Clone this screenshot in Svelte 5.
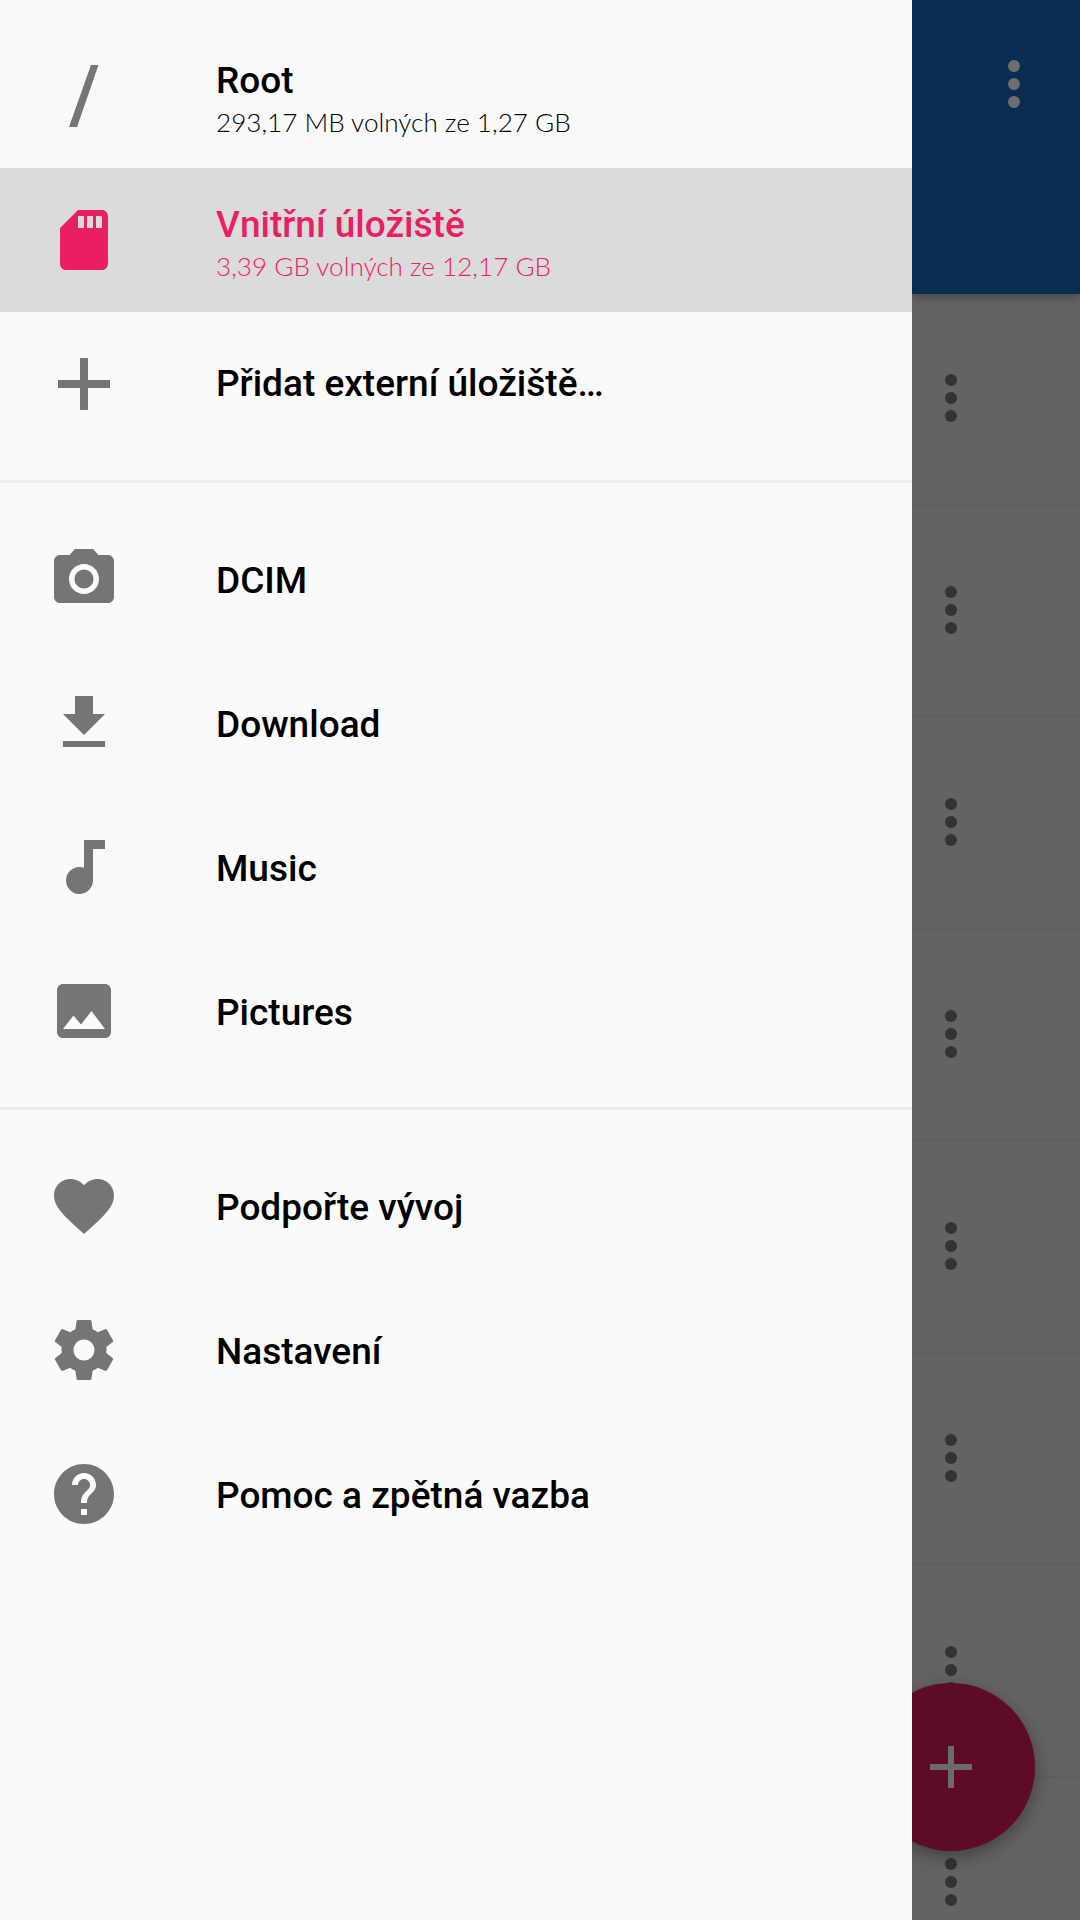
<script>
  const icons = {
    sd: 'M18 2h-8L4.02 8 4 20c0 1.1.9 2 2 2h12c1.1 0 2-.9 2-2V4c0-1.1-.9-2-2-2zm-6 6h-2V4h2v4zm3 0h-2V4h2v4zm3 0h-2V4h2v4z',
    add: 'M10.67 3.33h2.67v7.34h7.33v2.66h-7.33v7.34h-2.67v-7.34H3.33v-2.66h7.34z',
    camera: 'M9 2L7.17 4H4c-1.1 0-2 .9-2 2v12c0 1.1.9 2 2 2h16c1.1 0 2-.9 2-2V6c0-1.1-.9-2-2-2h-3.17L15 2H9zm3 15c-2.76 0-5-2.24-5-5s2.24-5 5-5 5 2.24 5 5-2.24 5-5 5zm0-8.2a3.2 3.2 0 1 0 0 6.4 3.2 3.2 0 0 0 0-6.4z',
    download: 'M19 9h-4V3H9v6H5l7 7 7-7zM5 18v2h14v-2H5z',
    music: 'M12 3h7v3h-4v10.5a4.5 4.5 0 1 1-3-4.24z',
    image: 'M21 19V5c0-1.1-.9-2-2-2H5c-1.1 0-2 .9-2 2v14c0 1.1.9 2 2 2h14c1.1 0 2-.9 2-2zM8.5 13.5l2.5 3.01L14.5 12l4.5 6H5l3.5-4.5z',
    heart: 'M12 21.35l-1.45-1.32C5.4 15.36 2 12.28 2 8.5 2 5.42 4.42 3 7.5 3c1.74 0 3.41.81 4.5 2.09C13.09 3.81 14.76 3 16.5 3 19.58 3 22 5.42 22 8.5c0 3.78-3.4 6.86-8.55 11.54L12 21.35z',
    gear: 'M19.43 12.98c.04-.32.07-.64.07-.98s-.03-.66-.07-.98l2.11-1.65c.19-.15.24-.42.12-.64l-2-3.46c-.12-.22-.39-.3-.61-.22l-2.49 1c-.52-.4-1.08-.73-1.69-.98l-.38-2.65C14.46 2.18 14.25 2 14 2h-4c-.25 0-.46.18-.49.42l-.38 2.65c-.61.25-1.17.59-1.69.98l-2.49-1c-.23-.09-.49 0-.61.22l-2 3.46c-.13.22-.07.49.12.64l2.11 1.65c-.04.32-.07.65-.07.98s.03.66.07.98l-2.11 1.65c-.19.15-.24.42-.12.64l2 3.46c.12.22.39.3.61.22l2.49-1c.52.4 1.08.73 1.69.98l.38 2.65c.03.24.24.42.49.42h4c.25 0 .46-.18.49-.42l.38-2.65c.61-.25 1.17-.59 1.69-.98l2.49 1c.23.09.49 0 .61-.22l2-3.46c.12-.22.07-.49-.12-.64l-2.11-1.65zM12 15.5c-1.93 0-3.5-1.57-3.5-3.5s1.57-3.5 3.5-3.5 3.5 1.57 3.5 3.5-1.57 3.5-3.5 3.5z',
    help: 'M12 2C6.48 2 2 6.48 2 12s4.48 10 10 10 10-4.48 10-10S17.52 2 12 2zm1 17h-2v-2h2v2zm2.07-7.75l-.9.92C13.45 12.9 13 13.5 13 15h-2v-.5c0-1.1.45-2.1 1.17-2.83l1.24-1.26c.37-.36.59-.86.59-1.41 0-1.1-.9-2-2-2s-2 .9-2 2H8c0-2.21 1.79-4 4-4s4 1.79 4 4c0 .88-.36 1.68-.93 2.25z',
    slash: 'M14.33 1.67h2.5L9.67 22.33H7z',
  };

  const sections = [
    [
      { icon: 'slash', title: 'Root', sub: '293,17 MB volných ze 1,27 GB' },
      { icon: 'sd', title: 'Vnitřní úložiště', sub: '3,39 GB volných ze 12,17 GB', active: true },
      { icon: 'add', title: 'Přidat externí úložiště…' },
    ],
    [
      { icon: 'camera', title: 'DCIM' },
      { icon: 'download', title: 'Download' },
      { icon: 'music', title: 'Music' },
      { icon: 'image', title: 'Pictures' },
    ],
    [
      { icon: 'heart', title: 'Podpořte vývoj' },
      { icon: 'gear', title: 'Nastavení' },
      { icon: 'help', title: 'Pomoc a zpětná vazba' },
    ],
  ];

  const fileRows = Array(8).fill(0);
</script>

<div class="screen">
  <nav class="drawer">
    {#each sections as section, i}
      {#if i > 0}<div class="divider"></div>{/if}
      <ul class="section">
        {#each section as item}
          <li class="item" class:active={item.active}>
            <svg class="icon" viewBox="0 0 24 24"><path d={icons[item.icon]} /></svg>
            <div class="label" class:two={item.sub}>
              <span class="title">{item.title}</span>
              {#if item.sub}<span class="sub">{item.sub}</span>{/if}
            </div>
          </li>
        {/each}
      </ul>
    {/each}
  </nav>

  <main class="behind">
    <header class="appbar">
      <div class="dots light"><i></i><i></i><i></i></div>
    </header>
    {#each fileRows as _}
      <div class="file-row">
        <div class="dots"><i></i><i></i><i></i></div>
      </div>
    {/each}
    <button class="fab" aria-label="Přidat">
      <svg viewBox="0 0 42 42" width="42" height="42"><path d="M18 0h6v18h18v6H24v18h-6V24H0v-6h18z" /></svg>
    </button>
  </main>
</div>

<style>
  :global(body) {
    margin: 0;
  }

  .screen {
    display: flex;
    width: 1080px;
    height: 1920px;
    overflow: hidden;
    background: #636363;
  }

  .drawer {
    position: relative;
    z-index: 2;
    flex: 0 0 912px;
    background: #fafafa;
  }

  .section {
    list-style: none;
    margin: 0;
    padding: 24px 0;
  }

  .divider {
    height: 3px;
    background: #eeeeee;
  }

  .item {
    display: flex;
    align-items: center;
    height: 144px;
    padding-left: 48px;
    color: #000;
  }

  .item.active {
    background: #dbdbdb;
    color: #e91e63;
  }

  .icon {
    flex: none;
    width: 72px;
    height: 72px;
    margin-right: 96px;
    fill: #757575;
  }

  .item.active .icon {
    fill: #e91e63;
  }

  .label {
    display: flex;
    flex-direction: column;
    padding-top: 4px;
  }

  .section:first-child .label {
    padding-top: 0;
  }

  .section:first-child .label.two {
    padding-top: 5px;
  }

  .title {
    font-family: Roboto, sans-serif;
    font-weight: 500;
    font-size: 37px;
    line-height: 46px;
  }

  .sub {
    font-family: Lato, sans-serif;
    font-weight: 300;
    font-size: 26.1px;
    line-height: 36px;
  }

  .behind {
    position: relative;
    flex: 1;
    min-width: 0;
  }

  .appbar {
    position: relative;
    z-index: 1;
    display: flex;
    justify-content: flex-end;
    align-items: center;
    box-sizing: border-box;
    height: 294px;
    padding: 0 60px 126px 0;
    background: #0a2e52;
    box-shadow: 0 3px 9px rgba(0, 0, 0, 0.3);
  }

  .file-row {
    display: flex;
    align-items: center;
    box-sizing: border-box;
    height: 212px;
    padding: 0 0 1px 33px;
    border-bottom: 3px solid #5f5f5f;
  }

  .dots {
    display: flex;
    flex-direction: column;
    gap: 6px;
  }

  .dots i {
    display: block;
    width: 12px;
    height: 12px;
    border-radius: 50%;
    background: #333333;
  }

  .dots.light i {
    background: #6e6e6e;
  }

  .fab {
    position: absolute;
    right: 45px;
    bottom: 69px;
    display: flex;
    align-items: center;
    justify-content: center;
    width: 168px;
    height: 168px;
    padding: 0;
    border: none;
    border-radius: 50%;
    background: #5e0b29;
    box-shadow: 0 6px 18px rgba(0, 0, 0, 0.35);
  }

  .fab svg {
    fill: #6b6b6b;
  }
</style>
